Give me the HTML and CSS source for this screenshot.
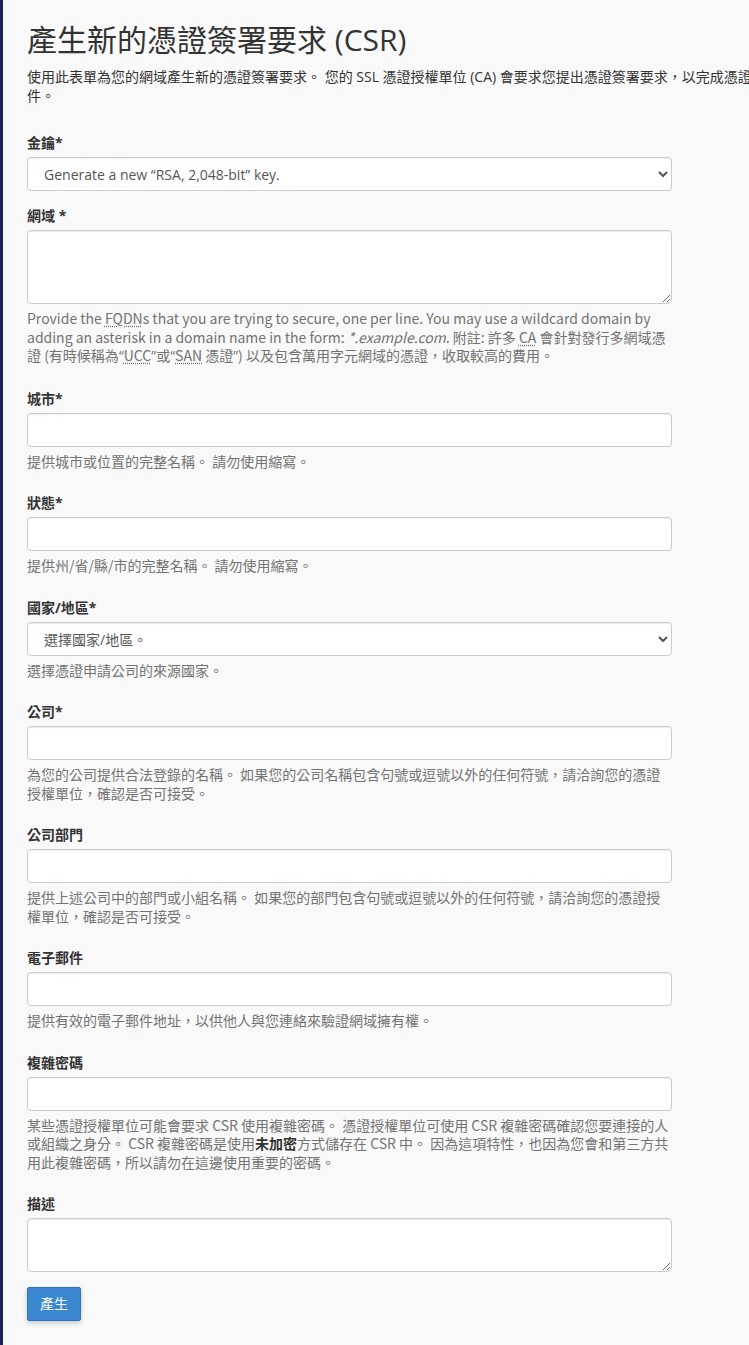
FILE: index.html
```html
<!DOCTYPE html>
<html lang="zh-Hant">
<head>
<meta charset="utf-8">
<title>產生新的憑證簽署要求 (CSR)</title>
<link rel="stylesheet" href="styles.css">
</head>
<body>
<div class="page">
  <div class="content">
    <h1 class="title">產生新的憑證簽署要求 (CSR)</h1>
    <p class="intro">使用此表單為您的網域產生新的憑證簽署要求。 您的 SSL 憑證授權單位 (CA) 會要求您提出憑證簽署要求，以完成憑證申請文<br>件。</p>

    <form class="csr-form">
      <div class="form-group">
        <label class="field-label" for="key">金鑰*</label>
        <select id="key" class="form-control">
          <option>Generate a new “RSA, 2,048-bit” key.</option>
        </select>
      </div>

      <div class="form-group">
        <label class="field-label" for="domains">網域 *</label>
        <textarea id="domains" class="form-control" rows="3"></textarea>
        <p class="help-block">Provide the <abbr>FQDN</abbr>s that you are trying to secure, one per line. You may use a wildcard domain by adding an asterisk in a domain name in the form: <em>*.example.com</em>. 附註: 許多 <abbr>CA</abbr> 會針對發行多網域憑證 (有時候稱為<span class="q">“</span><abbr>UCC</abbr><span class="q">”</span>或<span class="q">“</span><abbr>SAN</abbr> 憑證<span class="q">”</span>) 以及包含萬用字元網域的憑證，收取較高的費用。</p>
      </div>

      <div class="form-group">
        <label class="field-label" for="city">城市*</label>
        <input id="city" class="form-control" type="text">
        <p class="help-block">提供城市或位置的完整名稱。 請勿使用縮寫。</p>
      </div>

      <div class="form-group">
        <label class="field-label" for="state">狀態*</label>
        <input id="state" class="form-control" type="text">
        <p class="help-block">提供州/省/縣/市的完整名稱。 請勿使用縮寫。</p>
      </div>

      <div class="form-group">
        <label class="field-label" for="country">國家/地區*</label>
        <select id="country" class="form-control">
          <option>選擇國家/地區。</option>
        </select>
        <p class="help-block">選擇憑證申請公司的來源國家。</p>
      </div>

      <div class="form-group">
        <label class="field-label" for="company">公司*</label>
        <input id="company" class="form-control" type="text">
        <p class="help-block">為您的公司提供合法登錄的名稱。 如果您的公司名稱包含句號或逗號以外的任何符號，請洽詢您的憑證授權單位，確認是否可接受。</p>
      </div>

      <div class="form-group">
        <label class="field-label" for="division">公司部門</label>
        <input id="division" class="form-control" type="text">
        <p class="help-block">提供上述公司中的部門或小組名稱。 如果您的部門包含句號或逗號以外的任何符號，請洽詢您的憑證授權單位，確認是否可接受。</p>
      </div>

      <div class="form-group">
        <label class="field-label" for="email">電子郵件</label>
        <input id="email" class="form-control" type="text">
        <p class="help-block">提供有效的電子郵件地址，以供他人與您連絡來驗證網域擁有權。</p>
      </div>

      <div class="form-group">
        <label class="field-label" for="pass">複雜密碼</label>
        <input id="pass" class="form-control" type="text">
        <p class="help-block">某些憑證授權單位可能會要求 CSR 使用複雜密碼。 憑證授權單位可使用 CSR 複雜密碼確認您要連接的人或組織之身分。 CSR 複雜密碼是使用<strong>未加密</strong>方式儲存在 CSR 中。 因為這項特性，也因為您會和第三方共用此複雜密碼，所以請勿在這邊使用重要的密碼。</p>
      </div>

      <div class="form-group">
        <label class="field-label" for="desc">描述</label>
        <textarea id="desc" class="form-control" rows="2"></textarea>
      </div>

      <div class="actions">
        <button type="button" class="btn-primary">產生</button>
      </div>
    </form>
  </div>
</div>
</body>
</html>
```

FILE: styles.css
```css
html, body {
  margin: 0;
  padding: 0;
  overflow-x: hidden;
}

body {
  background: #f9f9f9;
  color: #333;
  font-family: "Open Sans", "Noto Sans CJK TC", sans-serif;
  font-size: 14px;
  line-height: 20px;
}

.page {
  min-height: 1345px;
  border-left: 3px solid #1e2556;
  box-sizing: border-box;
}

.content {
  padding: 0 0 0 24px;
  overflow: hidden;
}

.title {
  margin: 0;
  padding-top: 23px;
  font-size: 30px;
  line-height: 33px;
  font-weight: 400;
  color: #333;
}

.intro {
  margin: 11px 0 28px;
  width: 900px;
  line-height: 19px;
  font-size: 14px;
}

.csr-form {
  width: 645px;
  padding-bottom: 23px;
}

.form-group {
  display: flex;
  flex-direction: column;
  margin-bottom: 15px;
}

.field-label {
  display: block;
  font-weight: 700;
  margin-bottom: 4px;
  line-height: 20px;
}

.form-control {
  display: block;
  width: 100%;
  box-sizing: border-box;
  height: 34px;
  padding: 6px 12px;
  font-family: "Open Sans", "Noto Sans CJK TC", sans-serif;
  font-size: 14px;
  line-height: 20px;
  color: #555;
  background-color: #fff;
  border: 1px solid #ccc;
  border-radius: 4px;
  box-shadow: inset 0 1px 1px rgba(0, 0, 0, 0.075);
  margin: 0;
}

textarea.form-control {
  height: auto;
  resize: vertical;
}

.help-block {
  margin: 5px 0 8px;
  color: #737373;
  font-family: "Noto Sans CJK TC", sans-serif;
  font-size: 14px;
  line-height: 18.5px;
}

.help-block .q {
  font-family: "Open Sans", sans-serif;
}

.help-block abbr {
  text-decoration: underline dotted;
  text-underline-offset: 2px;
  cursor: help;
}

.help-block strong {
  color: #333;
  font-weight: 700;
}

.actions {
  display: flex;
}

.btn-primary {
  display: inline-block;
  height: 34px;
  padding: 6px 12px;
  font-family: "Open Sans", "Noto Sans CJK TC", sans-serif;
  font-size: 14px;
  line-height: 20px;
  color: #fff;
  background-color: #3b88d0;
  border: 1px solid #2e75b8;
  border-radius: 2px;
  box-shadow: 0 2px 5px rgba(0, 0, 0, 0.2);
  cursor: pointer;
}
```
